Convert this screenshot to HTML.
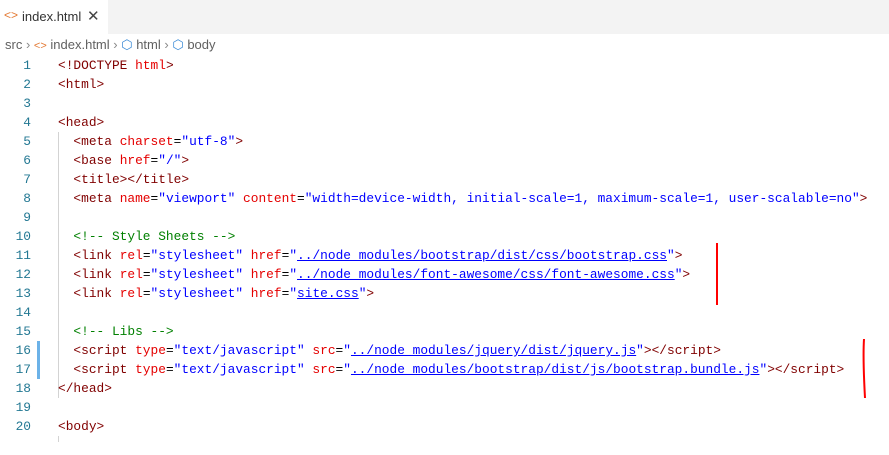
<!DOCTYPE html>
<html><head><meta charset="utf-8"><style>
body{margin:0;width:889px;height:442px;overflow:hidden;background:#fff;position:relative;font-family:"Liberation Sans",sans-serif}
.tabbar{position:absolute;left:0;top:0;width:889px;height:34px;background:#f3f3f3}
.tab{position:absolute;left:0;top:0;width:108px;height:34px;background:#fff;font-size:13px;color:#333}
.crumb{position:absolute;left:5px;top:37px;font-size:13px;color:#616161;white-space:nowrap}
.code{position:absolute;left:0;top:56px;font-family:"Liberation Mono",monospace;font-size:12.85px;line-height:19px;white-space:pre}
.ln{position:absolute;left:0;width:31px;text-align:right;color:#237893}
.tx{position:absolute;left:58px}
.t{color:#800000}.a{color:#e50000}.v{color:#0000ff}.c{color:#008000}.p{color:#000}
.u{text-decoration:underline;text-decoration-color:#0000ff}
</style></head><body>
<div class="tabbar"><div class="tab"><span style="position:absolute;left:4px;top:8px;color:#e37933;font-size:12px">&lt;&gt;</span><span style="position:absolute;left:22px;top:9px;color:#333">index.html</span><span style="position:absolute;left:87px;top:7px;font-size:15px;color:#444">✕</span></div></div>
<div class="crumb">src <span style="color:#888">›</span> <span style="color:#e37933;font-size:11px">&lt;&gt;</span> index.html <span style="color:#888">›</span> <span style="color:#3a8ad6">⬡</span> html <span style="color:#888">›</span> <span style="color:#3a8ad6">⬡</span> body</div>
<div style="position:absolute;left:58px;top:132px;width:1px;height:266px;background:#d3d3d3"></div>
<div style="position:absolute;left:58px;top:436px;width:1px;height:6px;background:#d3d3d3"></div>
<div style="position:absolute;left:37px;top:341px;width:3px;height:38px;background:#6cb2e8"></div>
<div class="code">
<div class="ln" style="top:0">1</div><div class="tx" style="top:0"><span class="t">&lt;!DOCTYPE</span> <span class="a">html</span><span class="t">&gt;</span></div>
<div class="ln" style="top:19px">2</div><div class="tx" style="top:19px"><span class="t">&lt;html&gt;</span></div>
<div class="ln" style="top:38px">3</div>
<div class="ln" style="top:57px">4</div><div class="tx" style="top:57px"><span class="t">&lt;head&gt;</span></div>
<div class="ln" style="top:76px">5</div><div class="tx" style="top:76px">  <span class="t">&lt;meta</span> <span class="a">charset</span>=<span class="v">"utf-8"</span><span class="t">&gt;</span></div>
<div class="ln" style="top:95px">6</div><div class="tx" style="top:95px">  <span class="t">&lt;base</span> <span class="a">href</span>=<span class="v">"/"</span><span class="t">&gt;</span></div>
<div class="ln" style="top:114px">7</div><div class="tx" style="top:114px">  <span class="t">&lt;title&gt;&lt;/title&gt;</span></div>
<div class="ln" style="top:133px">8</div><div class="tx" style="top:133px">  <span class="t">&lt;meta</span> <span class="a">name</span>=<span class="v">"viewport"</span> <span class="a">content</span>=<span class="v">"width=device-width, initial-scale=1, maximum-scale=1, user-scalable=no"</span><span class="t">&gt;</span></div>
<div class="ln" style="top:152px">9</div>
<div class="ln" style="top:171px">10</div><div class="tx" style="top:171px">  <span class="c">&lt;!-- Style Sheets --&gt;</span></div>
<div class="ln" style="top:190px">11</div><div class="tx" style="top:190px">  <span class="t">&lt;link</span> <span class="a">rel</span>=<span class="v">"stylesheet"</span> <span class="a">href</span>=<span class="v">"<span class="u">../node_modules/bootstrap/dist/css/bootstrap.css</span>"</span><span class="t">&gt;</span></div>
<div class="ln" style="top:209px">12</div><div class="tx" style="top:209px">  <span class="t">&lt;link</span> <span class="a">rel</span>=<span class="v">"stylesheet"</span> <span class="a">href</span>=<span class="v">"<span class="u">../node_modules/font-awesome/css/font-awesome.css</span>"</span><span class="t">&gt;</span></div>
<div class="ln" style="top:228px">13</div><div class="tx" style="top:228px">  <span class="t">&lt;link</span> <span class="a">rel</span>=<span class="v">"stylesheet"</span> <span class="a">href</span>=<span class="v">"<span class="u">site.css</span>"</span><span class="t">&gt;</span></div>
<div class="ln" style="top:247px">14</div>
<div class="ln" style="top:266px">15</div><div class="tx" style="top:266px">  <span class="c">&lt;!-- Libs --&gt;</span></div>
<div class="ln" style="top:285px">16</div><div class="tx" style="top:285px">  <span class="t">&lt;script</span> <span class="a">type</span>=<span class="v">"text/javascript"</span> <span class="a">src</span>=<span class="v">"<span class="u">../node_modules/jquery/dist/jquery.js</span>"</span><span class="t">&gt;&lt;/script&gt;</span></div>
<div class="ln" style="top:304px">17</div><div class="tx" style="top:304px">  <span class="t">&lt;script</span> <span class="a">type</span>=<span class="v">"text/javascript"</span> <span class="a">src</span>=<span class="v">"<span class="u">../node_modules/bootstrap/dist/js/bootstrap.bundle.js</span>"</span><span class="t">&gt;&lt;/script&gt;</span></div>
<div class="ln" style="top:323px">18</div><div class="tx" style="top:323px"><span class="t">&lt;/head&gt;</span></div>
<div class="ln" style="top:342px">19</div>
<div class="ln" style="top:361px">20</div><div class="tx" style="top:361px"><span class="t">&lt;body&gt;</span></div>
</div>
<svg style="position:absolute;left:0;top:0" width="889" height="442"><path d="M717 243 L717 305" stroke="#f00" stroke-width="2" fill="none"/><path d="M864 339 C863 355 864 380 865 398" stroke="#f00" stroke-width="2" fill="none"/></svg>
</body></html>
